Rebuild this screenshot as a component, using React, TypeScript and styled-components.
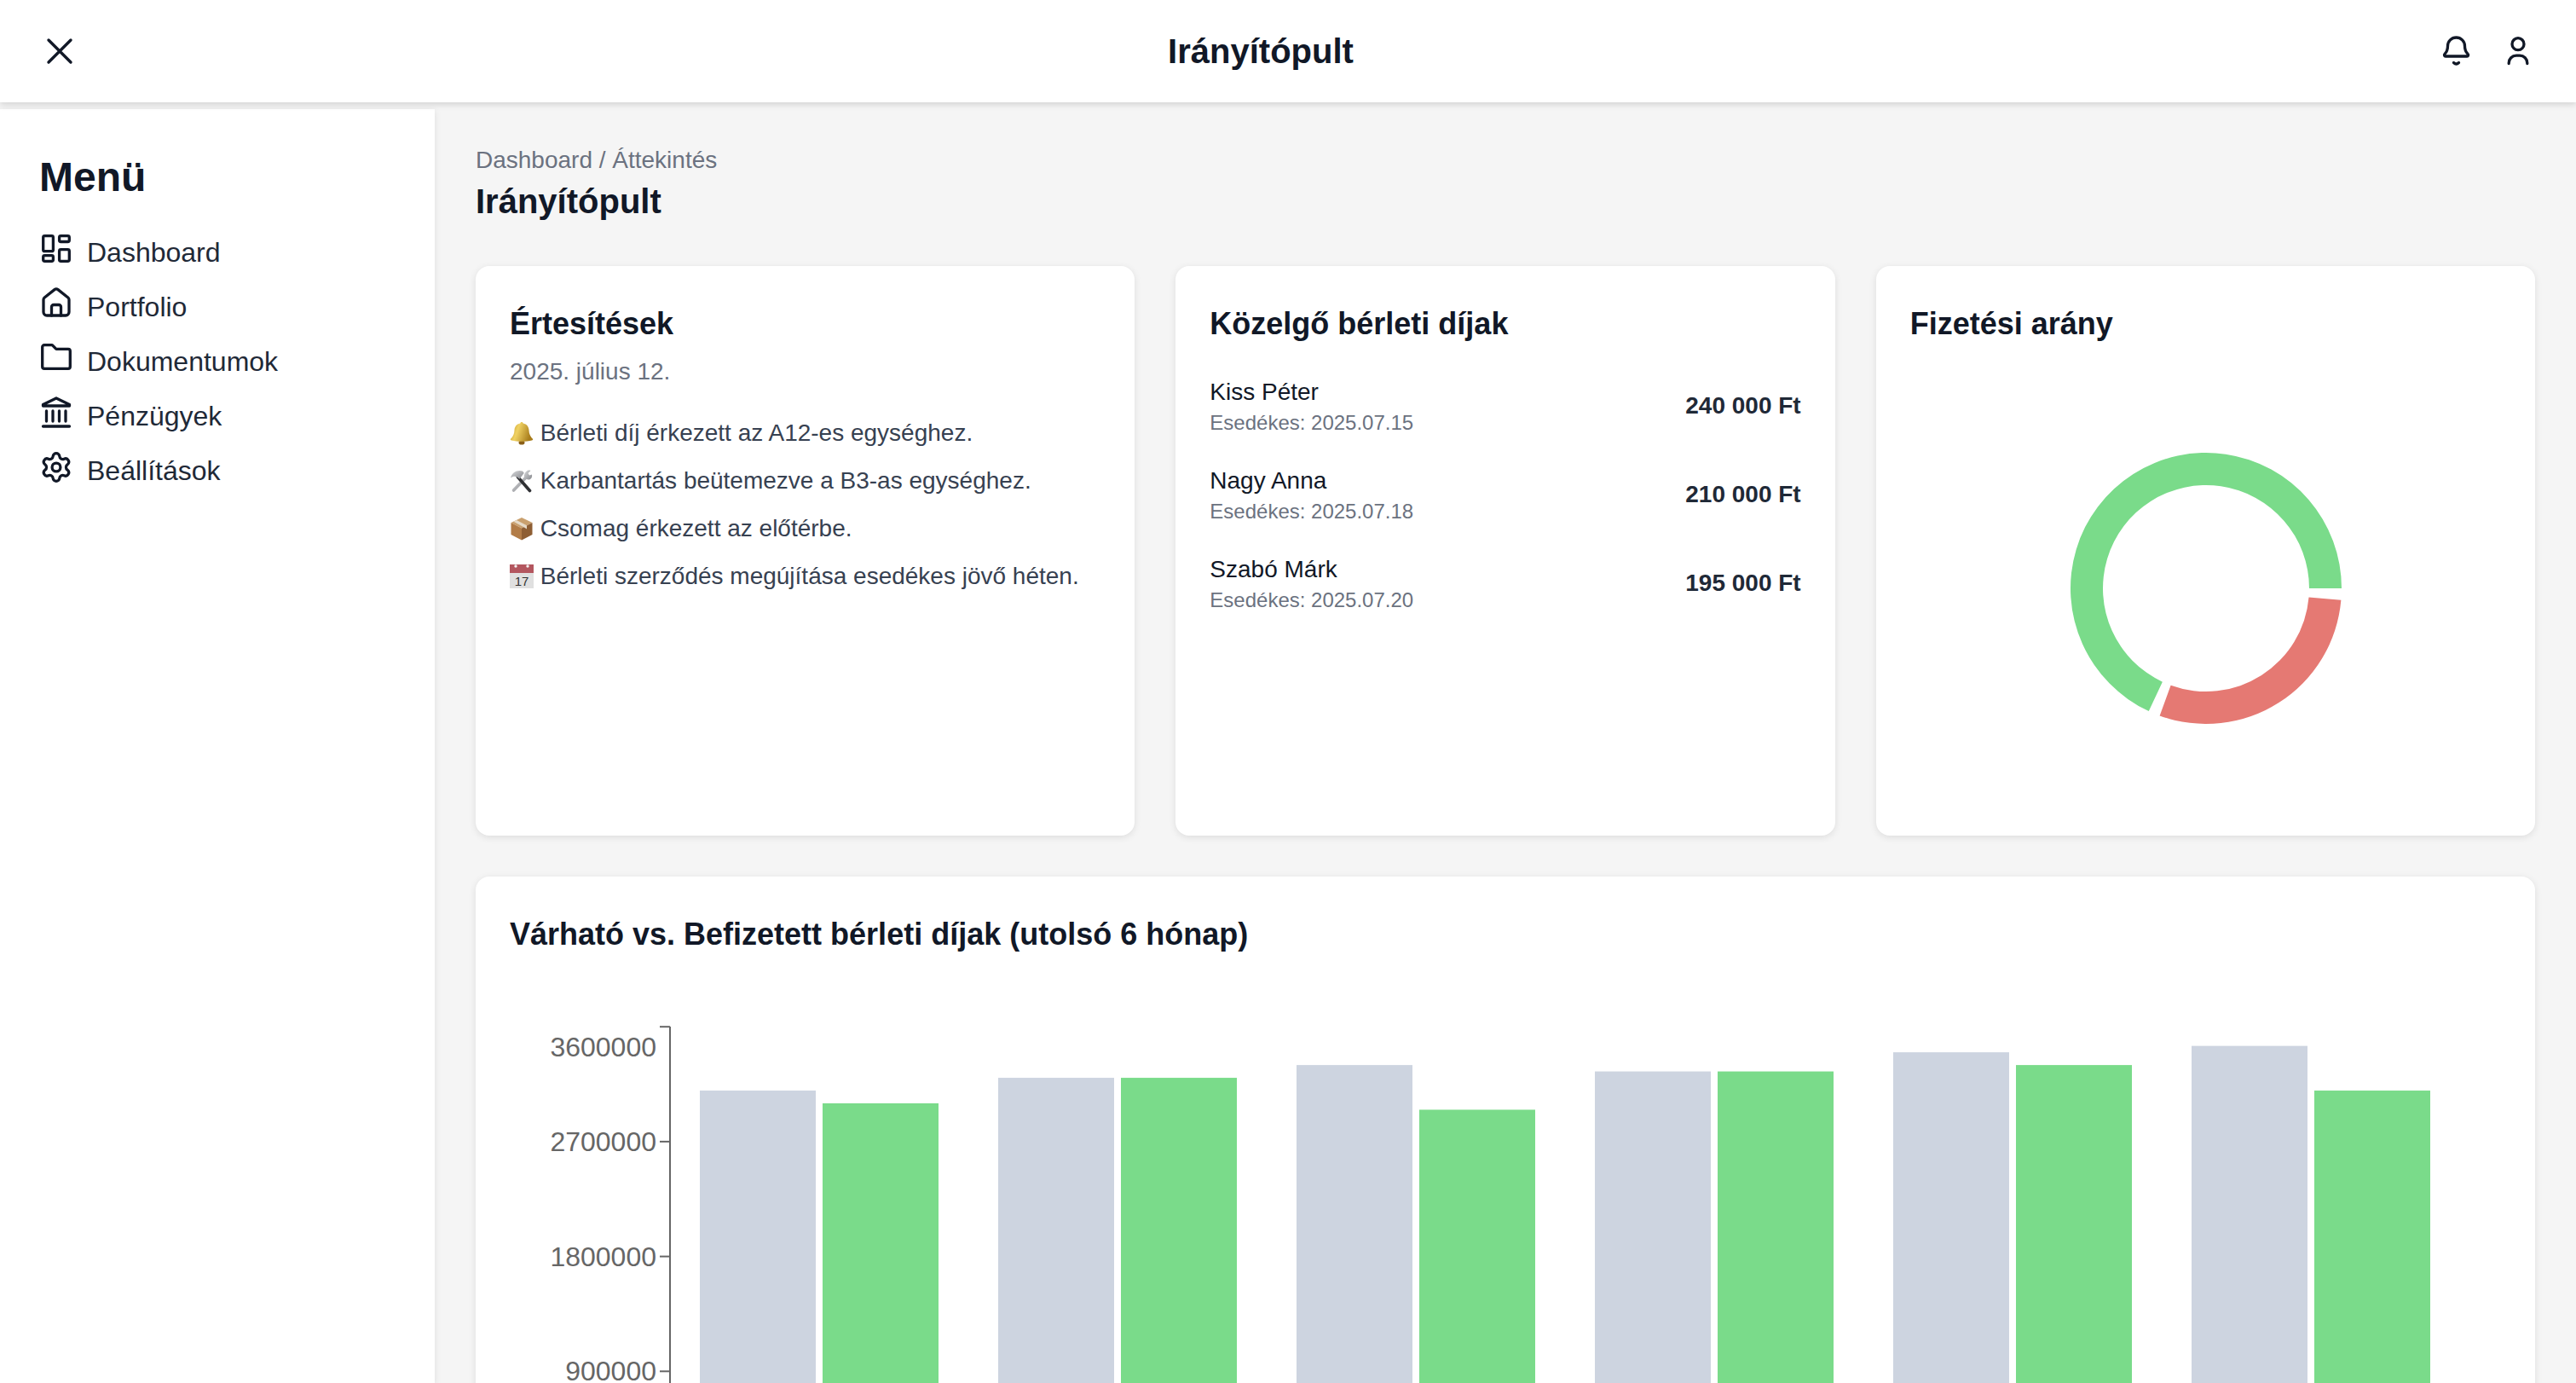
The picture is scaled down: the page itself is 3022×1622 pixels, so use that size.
import { FC } from "react";
import styled, { createGlobalStyle } from "styled-components";
import { Settings } from "lucide-react";

const notes = [
  { icon: "bell", text: "Bérleti díj érkezett az A12-es egységhez." },
  { icon: "tools", text: "Karbantartás beütemezve a B3-as egységhez." },
  { icon: "box", text: "Csomag érkezett az előtérbe." },
  { icon: "calendar", text: "Bérleti szerződés megújítása esedékes jövő héten." },
];

const rents = [
  { name: "Kiss Péter", due: "Esedékes: 2025.07.15", amount: "240 000 Ft" },
  { name: "Nagy Anna", due: "Esedékes: 2025.07.18", amount: "210 000 Ft" },
  { name: "Szabó Márk", due: "Esedékes: 2025.07.20", amount: "195 000 Ft" },
];

const bars = [
  { expected: 3100000, paid: 3000000 },
  { expected: 3200000, paid: 3200000 },
  { expected: 3300000, paid: 2950000 },
  { expected: 3250000, paid: 3250000 },
  { expected: 3400000, paid: 3300000 },
  { expected: 3450000, paid: 3100000 },
];

const ticks = [
  { value: 3600000, label: 72 },
  { value: 2700000, label: 182.6 },
  { value: 1800000, label: 317.7 },
  { value: 900000, label: 452 },
];

const CHART_ZERO = 587;
const PX_PER_UNIT = 538.8 / 3600000;

const arc = (from: number, to: number, r1: number, r2: number) => {
  const pt = (a: number, r: number) => {
    const rad = (a * Math.PI) / 180;
    return `${170 + r * Math.cos(rad)} ${170 - r * Math.sin(rad)}`;
  };
  const large = to - from > 180 ? 1 : 0;
  return `M${pt(from, r1)} A${r1} ${r1} 0 ${large} 0 ${pt(to, r1)} L${pt(to, r2)} A${r2} ${r2} 0 ${large} 1 ${pt(from, r2)} Z`;
};

const NavIcon: FC<{ name: string }> = ({ name }) => {
  if (name === "settings") {
    return <GearIcon size={36} viewBox="1 1 22 22" strokeWidth={2} />;
  }
  return (
    <NavSvg viewBox="0 0 36 38" width={36} height={38}>
      {name === "dashboard" && (
        <>
          <rect x="2.7" y="3.7" width="11.7" height="18" rx="1.8" />
          <rect x="2.7" y="26.6" width="11.7" height="6.8" rx="1.8" />
          <rect x="21.6" y="3.7" width="11.7" height="6.8" rx="1.8" />
          <rect x="21.6" y="19.6" width="11.7" height="13.8" rx="1.8" />
        </>
      )}
      {name === "home" && (
        <>
          <path d="M3 14.5c0-1 .4-1.8 1.2-2.5L16 2.6c1.2-.9 2.8-.9 4 0L31.8 12c.8.7 1.2 1.5 1.2 2.5V29a4 4 0 0 1-4 4H7a4 4 0 0 1-4-4Z" />
          <path d="M12.5 33V23a2.5 2.5 0 0 1 2.5-2.5h6a2.5 2.5 0 0 1 2.5 2.5v10" />
        </>
      )}
      {name === "folder" && (
        <path d="M1.7 6A2.3 2.3 0 0 1 4 3.7h8.5a2 2 0 0 1 1.5.7l3.2 3.3a2 2 0 0 0 1.5.7H32a2.3 2.3 0 0 1 2.3 2.3V29a2.3 2.3 0 0 1-2.3 2.3H4A2.3 2.3 0 0 1 1.7 29Z" />
      )}
      {name === "bank" && (
        <>
          <path d="M2.5 9.5 18 2l15.5 7.5V11h-31Z" />
          <path d="M6.5 17v12M14 17v12M21.5 17v12M29 17v12M2.5 35h31" />
        </>
      )}
    </NavSvg>
  );
};

const Emoji: FC<{ name: string }> = ({ name }) => (
  <EmojiSvg viewBox="0 0 28 28" width={28} height={28}>
    <defs>
      <linearGradient id="gold" x1="0" y1="0" x2="1" y2="0.3">
        <stop offset="0" stopColor="#b98f25" />
        <stop offset="0.4" stopColor="#f0d263" />
        <stop offset="1" stopColor="#a87d1c" />
      </linearGradient>
      <linearGradient id="steel" x1="0" y1="0" x2="1" y2="1">
        <stop offset="0" stopColor="#d9dadc" />
        <stop offset="1" stopColor="#85878c" />
      </linearGradient>
    </defs>
    {name === "bell" && (
      <>
        <ellipse cx="14" cy="25" rx="3.5" ry="2.6" fill="#8a5f17" />
        <path
          fill="url(#gold)"
          d="M14 1c1 0 1.6.6 1.7 1.5 4.3.8 6.600 4 6.800 8 .2 4.500 1.500 7.300 4.500 10.200.5.7.2 1.400-1 1.800-3.200.9-8 1.300-12 1.300s-8.800-.4-12-1.300c-1.200-.4-1.500-1.100-1-1.800 3-2.900 4.300-5.700 4.500-10.200.2-4 2.500-7.200 6.800-8C12.400 1.600 13 1 14 1Z"
        />
      </>
    )}
    {name === "tools" && (
      <>
        <path d="M21 8 4.500 25" stroke="url(#steel)" strokeWidth="3.600" strokeLinecap="round" fill="none" />
        <path fill="url(#steel)" d="M20.500 2c1.500-.6 3-.6 4 0l-3 3 1.500 2.500 3-1c.5 2.500-.2 4.500-2 5.500-1.500.8-3.300.6-4.600-.2l-2.500-2.500C16.500 6.500 18 3.500 20.500 2Z" />
        <path d="M9.500 9.500 23.500 25.500" stroke="#2f3033" strokeWidth="3.600" strokeLinecap="round" fill="none" />
        <path fill="url(#steel)" d="M1 10.500C2.500 4 9 .5 15 2.500l1.800 2.200-5.300 7-3-2.200C7 8.500 3.500 8.500 1 10.500Z" />
      </>
    )}
    {name === "box" && (
      <>
        <path fill="#c9a06e" d="M14 1 26.500 7 14 13.500 1.500 7Z" />
        <path fill="#b27c47" d="M1.500 7 14 13.500V27.500L1.500 21Z" />
        <path fill="#8e5e33" d="M26.500 7 14 13.500V27.500L26.500 21Z" />
        <path fill="#e6dac8" d="M8 4 20 10.300 20 14.500 16.500 12.300 4.500 5.800Z" />
      </>
    )}
    {name === "calendar" && (
      <>
        <rect x="0" y="9" width="28" height="19" fill="#e0e0e0" />
        <rect x="0" y="0" width="28" height="10" fill="#b3565f" />
        <circle cx="7" cy="2" r="1.700" fill="#f3f3f3" />
        <circle cx="21" cy="2" r="1.700" fill="#f3f3f3" />
        <EmojiDay x="14" y="25" textAnchor="middle">17</EmojiDay>
      </>
    )}
  </EmojiSvg>
);

const App: FC = () => {
  return (
    <>
      <GlobalStyle />
      <Page>
        <Header>
          <MenuButton>
            <svg viewBox="0 0 48 48" width={48} height={48} fill="none" stroke="#111827" strokeWidth="3.4" strokeLinecap="round">
              <path d="M11 11 37 37M37 11 11 37" />
            </svg>
          </MenuButton>
          <HeaderTitle>Irányítópult</HeaderTitle>
          <HeaderActions>
            <IconSvg viewBox="0 0 36 40" width={36} height={40}>
              <path d="M7.500 14a10 10 0 0 1 20 0c0 4.500 1.200 7 3.600 9.400 1 1 .4 2.600-1 2.600H5c-1.400 0-2-1.600-1-2.600C6.300 21 7.500 18.500 7.500 14Z" />
              <path d="M14.500 33.500q3 3 6 0" />
            </IconSvg>
            <IconSvg viewBox="0 0 30 40" width={30} height={40}>
              <circle cx="15" cy="11.700" r="7" />
              <path d="M4.200 34.500V34c0-5 3.800-8.800 8.800-8.800h4c5 0 8.800 3.800 8.800 8.800v.5" />
            </IconSvg>
          </HeaderActions>
        </Header>
        <Body>
          <Sidebar>
            <SidebarTitle>Menü</SidebarTitle>
            <Nav>
              <NavItem><NavIcon name="dashboard" />Dashboard</NavItem>
              <NavItem><NavIcon name="home" />Portfolio</NavItem>
              <NavItem><NavIcon name="folder" />Dokumentumok</NavItem>
              <NavItem><NavIcon name="bank" />Pénzügyek</NavItem>
              <NavItem><NavIcon name="settings" />Beállítások</NavItem>
            </Nav>
          </Sidebar>
          <Main>
            <Breadcrumb>Dashboard / Áttekintés</Breadcrumb>
            <PageTitle>Irányítópult</PageTitle>
            <CardGrid>
              <Card>
                <CardTitle>Értesítések</CardTitle>
                <DateLine>2025. július 12.</DateLine>
                <NoteList>
                  {notes.map((n) => (
                    <Note key={n.icon}>
                      <Emoji name={n.icon} /> {n.text}
                    </Note>
                  ))}
                </NoteList>
              </Card>
              <Card>
                <CardTitle>Közelgő bérleti díjak</CardTitle>
                <RentList>
                  {rents.map((r) => (
                    <RentRow key={r.name}>
                      <div>
                        <RentName>{r.name}</RentName>
                        <RentDue>{r.due}</RentDue>
                      </div>
                      <RentAmount>{r.amount}</RentAmount>
                    </RentRow>
                  ))}
                </RentList>
              </Card>
              <Card>
                <CardTitle>Fizetési arány</CardTitle>
                <DonutWrap>
                  <svg viewBox="0 0 340 340" width={340} height={340}>
                    <path d={arc(0, 245, 159, 121)} fill="#7adb8a" />
                    <path d={arc(250, 355, 159, 121)} fill="#e57973" />
                  </svg>
                </DonutWrap>
              </Card>
            </CardGrid>
            <ChartCard>
              <CardTitle>Várható vs. Befizetett bérleti díjak (utolsó 6 hónap)</CardTitle>
              <ChartSvg viewBox="0 0 2336 800" width={2336} height={800}>
                <line x1="188" y1="48" x2="188" y2={CHART_ZERO} stroke="#666" strokeWidth="2" />
                {ticks.map((t) => {
                  const y = CHART_ZERO - t.value * PX_PER_UNIT;
                  return (
                    <g key={t.value}>
                      <line x1="176" y1={y} x2="188" y2={y} stroke="#666" strokeWidth="2" />
                      <AxisLabel x="172" y={t.label} dy="0.355em" textAnchor="end">{t.value}</AxisLabel>
                    </g>
                  );
                })}
                {bars.map((b, i) => {
                  const x = 223 + i * 350;
                  const h1 = b.expected * PX_PER_UNIT;
                  const h2 = b.paid * PX_PER_UNIT;
                  return (
                    <g key={i}>
                      <rect x={x} y={CHART_ZERO - h1} width="136" height={h1} fill="#cdd4e0" />
                      <rect x={x + 144} y={CHART_ZERO - h2} width="136" height={h2} fill="#7adb8a" />
                    </g>
                  );
                })}
              </ChartSvg>
            </ChartCard>
          </Main>
        </Body>
      </Page>
    </>
  );
};

const GlobalStyle = createGlobalStyle`
  html, body {
    margin: 0;
    height: 100%;
    overflow: hidden;
    background: #f5f5f5;
    font-family: "Liberation Sans", Arial, sans-serif;
  }
  * { box-sizing: border-box; }
`;

const Page = styled.div`
  height: 1622px;
  display: flex;
  flex-direction: column;
  overflow: hidden;
`;

const Header = styled.header`
  height: 120px;
  flex: none;
  display: flex;
  align-items: center;
  justify-content: space-between;
  padding: 0 53px 0 46px;
  background: #fff;
  box-shadow: 0 2px 8px rgba(0, 0, 0, 0.16);
  position: relative;
  z-index: 2;
`;

const MenuButton = styled.div`
  width: 48px;
  height: 48px;
`;

const HeaderTitle = styled.h1`
  margin: 0;
  font-size: 40px;
  line-height: 56px;
  font-weight: 700;
  color: #111827;
`;

const HeaderActions = styled.div`
  display: flex;
  align-items: center;
  gap: 39px;
`;

const IconSvg = styled.svg`
  flex: none;
  fill: none;
  stroke: #111827;
  stroke-width: 3.3;
  stroke-linecap: round;
  stroke-linejoin: round;
`;

const NavSvg = styled(IconSvg)`
  margin-top: 1px;
`;

const GearIcon = styled(Settings)`
  flex: none;
  color: #111827;
  margin-top: 2px;
`;

const Body = styled.div`
  flex: 1;
  display: flex;
  min-height: 0;
  margin-top: 8px;
`;

const Sidebar = styled.aside`
  width: 510px;
  flex: none;
  padding: 48px;
  background: #fff;
  box-shadow: 0 2px 8px rgba(0, 0, 0, 0.1);
`;

const SidebarTitle = styled.h2`
  margin: 0 0 32px -2px;
  font-size: 48px;
  line-height: 64px;
  font-weight: 700;
  color: #111827;
`;

const Nav = styled.nav`
  display: flex;
  flex-direction: column;
  gap: 16px;
`;

const NavItem = styled.div`
  display: flex;
  align-items: flex-start;
  gap: 18px;
  height: 48px;
  font-size: 32px;
  line-height: 48px;
  color: #1f2937;
`;

const Main = styled.main`
  flex: 1;
  min-width: 0;
  padding: 40px 48px;
`;

const Breadcrumb = styled.div`
  font-size: 28px;
  line-height: 40px;
  color: #6b7280;
`;

const PageTitle = styled.h2`
  margin: 0 0 48px;
  font-size: 40px;
  line-height: 56px;
  font-weight: 700;
  color: #111827;
`;

const CardGrid = styled.div`
  display: grid;
  grid-template-columns: repeat(3, 1fr);
  gap: 48px;
`;

const Card = styled.section`
  background: #fff;
  border-radius: 16px;
  padding: 40px;
  box-shadow: 0 2px 8px rgba(0, 0, 0, 0.1);
`;

const ChartCard = styled(Card)`
  margin-top: 48px;
  height: 1000px;
`;

const CardTitle = styled.h3`
  margin: 0;
  font-size: 36px;
  line-height: 56px;
  font-weight: 700;
  color: #111827;
`;

const DateLine = styled.div`
  margin-top: 8px;
  font-size: 28px;
  line-height: 40px;
  color: #6b7280;
`;

const NoteList = styled.ul`
  list-style: none;
  margin: 32px 0 0;
  padding: 0;
  display: flex;
  flex-direction: column;
  gap: 16px;
`;

const Note = styled.li`
  font-size: 28px;
  line-height: 40px;
  color: #374151;
  white-space: nowrap;
`;

const EmojiSvg = styled.svg`
  display: inline-block;
  vertical-align: -5px;
`;

const EmojiDay = styled.text`
  font-family: "Liberation Sans", Arial, sans-serif;
  font-size: 15px;
  fill: #333;
`;

const RentList = styled.div`
  margin-top: 32px;
  display: flex;
  flex-direction: column;
  gap: 32px;
`;

const RentRow = styled.div`
  display: flex;
  align-items: center;
  justify-content: space-between;
`;

const RentName = styled.div`
  font-size: 28px;
  line-height: 40px;
  color: #111827;
`;

const RentDue = styled.div`
  font-size: 24px;
  line-height: 32px;
  color: #6b7280;
`;

const RentAmount = styled.div`
  font-size: 28px;
  line-height: 40px;
  font-weight: 700;
  color: #1f2937;
`;

const DonutWrap = styled.div`
  height: 500px;
  margin-top: 32px;
  padding-left: 2px;
  display: flex;
  align-items: center;
  justify-content: center;
`;

const ChartSvg = styled.svg`
  display: block;
  margin-top: 32px;
`;

const AxisLabel = styled.text`
  font-family: "Liberation Sans", Arial, sans-serif;
  font-size: 32px;
  fill: #666;
`;

export default App;
